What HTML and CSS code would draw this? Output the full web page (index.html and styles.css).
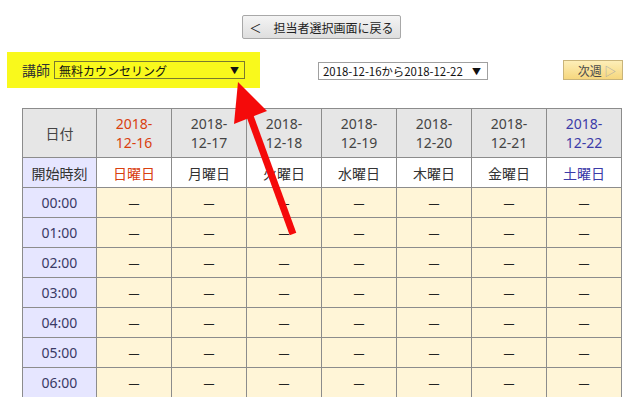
FILE: index.html
```html
<!DOCTYPE html>
<html lang="ja">
<head>
    <meta charset="UTF-8">
    <title>予約カレンダー</title>
    <link rel="stylesheet" href="styles.css">
</head>
<body>
    <div class="page">
        <div class="top-bar">
            <button class="back-btn">＜　担当者選択画面に戻る</button>
        </div>

        <div class="controls">
            <div class="teacher-box">
                <span class="teacher-label">講師</span>
                <div class="teacher-select">
                    <span>無料カウンセリング</span>
                    <span class="caret">▼</span>
                </div>
            </div>
            <div class="week-select">
                <span>2018-12-16から2018-12-22</span>
                <span class="caret">▼</span>
            </div>
            <button class="next-btn">次週 <span class="next-arrow">▷</span></button>
        </div>

        <table class="schedule">
            <thead>
                <tr class="date-row">
                    <th class="label-cell">日付</th>
                    <th class="sun">2018-<br>12-16</th>
                    <th>2018-<br>12-17</th>
                    <th>2018-<br>12-18</th>
                    <th>2018-<br>12-19</th>
                    <th>2018-<br>12-20</th>
                    <th>2018-<br>12-21</th>
                    <th class="sat">2018-<br>12-22</th>
                </tr>
                <tr class="day-row">
                    <th class="label-cell">開始時刻</th>
                    <th class="sun">日曜日</th>
                    <th>月曜日</th>
                    <th>火曜日</th>
                    <th>水曜日</th>
                    <th>木曜日</th>
                    <th>金曜日</th>
                    <th class="sat">土曜日</th>
                </tr>
            </thead>
            <tbody id="slots"></tbody>
        </table>
    </div>

    <svg class="pointer" width="643" height="397" viewBox="0 0 643 397">
        <line x1="293" y1="234" x2="250" y2="116" stroke="#f50a0a" stroke-width="7"/>
        <polygon points="238,82 267,111 234,124" fill="#f50a0a"/>
    </svg>

    <script>
        const body = document.getElementById('slots');
        for (let h = 0; h < 7; h++) {
            const row = document.createElement('tr');
            const time = String(h).padStart(2, '0') + ':00';
            let html = `<td class="time-cell">${time}</td>`;
            for (let d = 0; d < 7; d++) {
                html += '<td class="slot">－</td>';
            }
            row.innerHTML = html;
            body.appendChild(row);
        }
    </script>
</body>
</html>
```

FILE: styles.css
```css
:root {
    --border: #8c8c8c;
    --head-bg: #e6e6e6;
    --label-bg: #e6e6ff;
    --slot-bg: #fff5d7;
    --sun: #d9400f;
    --sat: #3b3ba8;
    --text: #333;
}

body {
    margin: 0;
    background: white;
    font-family: "Noto Sans", "Noto Sans CJK JP", sans-serif;
    color: var(--text);
    overflow: hidden;
}

.page {
    padding-top: 15px;
}

.top-bar {
    display: flex;
    justify-content: center;
}

.back-btn {
    width: 159px;
    height: 24px;
    padding: 0;
    font-family: "Noto Sans CJK JP", sans-serif;
    font-size: 12px;
    color: #222;
    background: linear-gradient(#f4f4f4, #dedede);
    border: 1px solid #a8a8a8;
    border-radius: 2px;
}

.controls {
    display: flex;
    align-items: center;
    margin-top: 13px;
    padding: 0 20px 0 7px;
}

.teacher-box {
    display: flex;
    align-items: center;
    width: 253px;
    height: 36px;
    padding-left: 15px;
    box-sizing: border-box;
    background: #f9f91c;
}

.teacher-label {
    font-family: "Noto Sans CJK JP", sans-serif;
    font-size: 14px;
    margin-right: 4px;
}

.teacher-select,
.week-select {
    display: flex;
    align-items: center;
    justify-content: space-between;
    box-sizing: border-box;
    font-family: "Noto Sans CJK JP", sans-serif;
    font-size: 12px;
    color: #111;
}

.teacher-select {
    width: 191px;
    height: 18px;
    padding: 0 5px 0 4px;
    border: 1px solid #7a7a30;
}

.week-select {
    width: 170px;
    height: 18px;
    margin-left: 58px;
    margin-top: 2px;
    padding: 0 6px 0 4px;
    border: 1px solid #a0a0a0;
    background: white;
    font-size: 11.4px;
}

.caret {
    font-size: 9px;
}

.next-btn {
    margin-left: auto;
    width: 60px;
    height: 20px;
    padding: 0 0 0 8px;
    font-family: "Noto Sans CJK JP", sans-serif;
    font-size: 12px;
    color: #4a4a4a;
    background: linear-gradient(#fdeeb8, #f6d77e);
    border: 1px solid #c9b47a;
}

.next-arrow {
    color: #a8a8a8;
    font-size: 12px;
}

.schedule {
    margin: 20px 0 0 22px;
    border-collapse: collapse;
    table-layout: fixed;
    width: 600px;
    font-size: 14px;
}

.schedule th,
.schedule td {
    border: 1px solid var(--border);
    text-align: center;
    padding: 0;
    font-weight: normal;
    width: 74px;
}

.schedule .label-cell {
    width: 73px;
}

.date-row th {
    height: 48px;
    background: var(--head-bg);
    line-height: 19px;
    color: #444;
}

.date-row .label-cell {
    font-family: "Noto Sans CJK JP", sans-serif;
}

.day-row th {
    height: 29px;
    background: white;
    font-family: "Noto Sans CJK JP", sans-serif;
}

.day-row .label-cell {
    background: var(--label-bg);
}

.schedule .sun {
    color: var(--sun);
}

.schedule .sat {
    color: var(--sat);
}

.schedule td {
    height: 29px;
}

.time-cell {
    background: var(--label-bg);
    color: #3a3a66;
}

.slot {
    background: var(--slot-bg);
    font-family: "Noto Sans CJK JP", sans-serif;
    color: #222;
}

.pointer {
    position: absolute;
    left: 0;
    top: 0;
    pointer-events: none;
}
```
